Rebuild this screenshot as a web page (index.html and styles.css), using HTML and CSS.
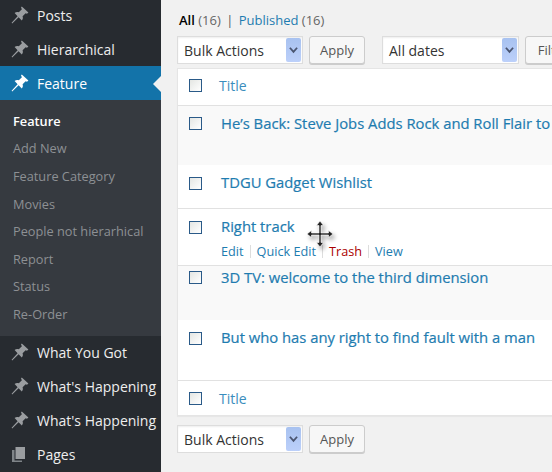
FILE: index.html
```html
<!DOCTYPE html>
<html lang="en">
<head>
<meta charset="utf-8">
<title>Feature</title>
<link rel="stylesheet" href="styles.css">
</head>
<body>
<svg class="defs" width="0" height="0" aria-hidden="true">
  <symbol id="pin" viewBox="0 0 18 18">
    <path d="M10.8 0.4 L17.4 6.6 L16 7.8 L14.6 7.2 L11.6 10.2 C12.2 12 11.8 13.4 10.8 14.4 L7.6 11.2 L1.2 17.4 L0.6 16.8 L6.6 10.2 L3.6 7 C4.8 6 6.2 5.6 7.8 6.2 L10.9 3.2 L10 1.6 Z"/>
  </symbol>
</svg>
<div class="page">
  <nav class="sidebar">
    <a class="menu-item"><svg class="menu-icon"><use href="#pin"/></svg><span>Posts</span></a>
    <a class="menu-item"><svg class="menu-icon"><use href="#pin"/></svg><span>Hierarchical</span></a>
    <a class="menu-item current"><svg class="menu-icon"><use href="#pin"/></svg><span>Feature</span></a>
    <div class="submenu">
      <a class="sub-item active">Feature</a>
      <a class="sub-item">Add New</a>
      <a class="sub-item">Feature Category</a>
      <a class="sub-item">Movies</a>
      <a class="sub-item">People not hierarhical</a>
      <a class="sub-item">Report</a>
      <a class="sub-item">Status</a>
      <a class="sub-item">Re-Order</a>
    </div>
    <a class="menu-item lower"><svg class="menu-icon"><use href="#pin"/></svg><span>What You Got</span></a>
    <a class="menu-item lower"><svg class="menu-icon"><use href="#pin"/></svg><span>What's Happening</span></a>
    <a class="menu-item lower"><svg class="menu-icon"><use href="#pin"/></svg><span>What's Happening</span></a>
    <a class="menu-item lower"><svg class="menu-icon" viewBox="0 0 18 18"><path class="page-back" d="M1 5 H3.5 V15.5 H11 V17 H1 Z"/><path d="M4.5 2 H14 V14 H4.5 Z"/></svg><span>Pages</span></a>
  </nav>
  <main class="content">
    <div class="views"><b>All</b> <span class="count">(16)</span> <span class="sep">|</span> <a class="link">Published</a> <span class="count">(16)</span></div>
    <div class="tablenav">
      <div class="select bulk"><span>Bulk Actions</span><i class="arrow"><svg viewBox="0 0 10 8" width="10" height="8"><path d="M1 1.5 L5 6 L9 1.5" /></svg></i></div>
      <div class="button">Apply</div>
      <div class="select dates"><span>All dates</span><i class="arrow"><svg viewBox="0 0 10 8" width="10" height="8"><path d="M1 1.5 L5 6 L9 1.5" /></svg></i></div>
      <div class="button">Filter</div>
    </div>
    <div class="table">
      <div class="row head"><i class="check"></i><a class="col-title">Title</a></div>
      <div class="row post r1 alt"><i class="check"></i><a class="post-title">He’s Back: Steve Jobs Adds Rock and Roll Flair to</a></div>
      <div class="row post r2"><i class="check"></i><a class="post-title">TDGU Gadget Wishlist</a></div>
      <div class="row post r3">
        <i class="check"></i>
        <div class="stack">
          <a class="post-title">Right track</a>
          <div class="actions"><a class="link">Edit</a><b class="bar"></b><a class="link">Quick Edit</a><b class="bar"></b><a class="trash">Trash</a><b class="bar"></b><a class="link">View</a></div>
        </div>
      </div>
      <div class="row post r4 alt"><i class="check"></i><a class="post-title">3D TV: welcome to the third dimension</a></div>
      <div class="row post r5"><i class="check"></i><a class="post-title">But who has any right to find fault with a man</a></div>
      <div class="row foot"><i class="check"></i><a class="col-title">Title</a></div>
    </div>
    <div class="tablenav bottom">
      <div class="select bulk"><span>Bulk Actions</span><i class="arrow"><svg viewBox="0 0 10 8" width="10" height="8"><path d="M1 1.5 L5 6 L9 1.5" /></svg></i></div>
      <div class="button">Apply</div>
    </div>
  </main>
</div>
<svg class="cursor" viewBox="0 0 28 28" width="28" height="28" aria-hidden="true">
  <path class="cursor-main" d="M14 1 L17.5 5.5 H15 V13 H22.5 V10.5 L27 14 L22.5 17.5 V15 H15 V22.5 H17.5 L14 27 L10.5 22.5 H13 V15 H5.5 V17.5 L1 14 L5.5 10.5 V13 H13 V5.5 H10.5 Z"/>
</svg>
</body>
</html>
```
FILE: styles.css
```css
html, body { margin: 0; padding: 0; height: 100%; overflow: hidden; }
body { background: #f1f1f1; font-family: "Open Sans", sans-serif; font-size: 13px; color: #444; position: relative; }
.defs { position: absolute; }
.page { display: flex; height: 472px; width: 552px; overflow: hidden; }

.sidebar { width: 161px; flex: none; background: #272b30; margin-top: -2px; display: flex; flex-direction: column; height: 474px; }
.menu-item { display: flex; align-items: center; height: 34px; flex: none; color: #eee; font-size: 14px; box-sizing: border-box; padding-left: 11px; white-space: nowrap; overflow: hidden; position: relative; }
.menu-item.lower { padding-bottom: 2px; }
.menu-icon { width: 18px; height: 18px; flex: none; margin-right: 8px; fill: #9a9da0; }
.menu-icon .page-back { fill: #7f8488; }
.menu-item.current { background: #1373a9; color: #fff; }
.menu-item.current .menu-icon { fill: #fff; }
.menu-item.current::after { content: ""; position: absolute; right: 0; top: 10px; border: 8px solid transparent; border-right-color: #f1f1f1; border-left: 0; }
.submenu { background: #363a40; height: 236px; flex: none; display: flex; flex-direction: column; padding-top: 7.8px; box-sizing: border-box; }
.sub-item { height: 27.6px; flex: none; line-height: 27.6px; padding-left: 13px; font-size: 12.75px; color: #8d9094; white-space: nowrap; }
.sub-item.active { color: #fff; font-weight: 600; }

.content { flex: 1; min-width: 0; padding: 0 0 0 16px; }
.views { height: 36px; box-sizing: border-box; padding: 11px 0 0 2px; font-size: 13px; line-height: 18px; color: #666; white-space: nowrap; }
.views b { font-weight: 600; color: #000; }
.views .sep { margin: 0 2px; color: #555; }
.link { color: #1e7cb0; }
.count { color: #666; }

.tablenav { display: flex; align-items: flex-start; height: 32px; white-space: nowrap; }
.tablenav.bottom { margin-top: 9px; }
.select { flex: none; height: 28px; box-sizing: border-box; background: #fff; border: 1px solid #ddd; box-shadow: inset 0 1px 2px rgba(0,0,0,.07); display: flex; align-items: center; justify-content: space-between; font-size: 14px; color: #333; padding: 0 1px 0 6px; }
.select.bulk { width: 126px; margin-right: 6px; }
.select.dates { width: 137px; margin: 0 6px 0 17px; }
.arrow { width: 15px; height: 24px; background: linear-gradient(#a8c2f0, #bcd0fa); border-radius: 2px; display: flex; align-items: center; justify-content: center; }
.arrow svg { fill: none; stroke: #4a5570; stroke-width: 2; width: 9px; }
.button { height: 28px; width: 56px; flex: none; box-sizing: border-box; background: #f7f7f7; border: 1px solid #ccc; border-radius: 3px; box-shadow: 0 1px 0 #ccc; color: #555; font-size: 13px; line-height: 26px; text-align: center; }

.table { background: #fff; border: 1px solid #e5e5e5; border-right: 0; box-shadow: 0 1px 1px rgba(0,0,0,.04); width: 375px; box-sizing: border-box; display: flex; flex-direction: column; }
.row { display: flex; flex: none; box-sizing: border-box; padding-left: 11px; white-space: nowrap; overflow: hidden; }
.check { width: 13px; height: 13px; flex: none; box-sizing: border-box; border: 1px solid #2a5a88; background: linear-gradient(135deg, #e4e6e3, #fff); }
.head, .foot { align-items: center; }
.head { border-bottom: 1px solid #e1e1e1; height: 37px; padding-bottom: 3px; }
.foot { border-top: 1px solid #e1e1e1; height: 35px; }
.col-title { margin-left: 17px; font-size: 14px; color: #3a8dbd; }
.post { align-items: flex-start; }
.alt { background: #f9f9f9; }
.post-title { margin-left: 19px; font-size: 14.8px; font-weight: 400; color: #1e7cb0; line-height: 20px; -webkit-text-stroke: .2px #1e7cb0; }
.r1 { height: 59px; padding-top: 7px; }
.r1 .check { margin-top: 4px; }
.r2 { height: 44px; padding-top: 7px; border-bottom: 1px solid #e1e1e1; }
.r2 .check { margin-top: 5px; }
.r3 { height: 57px; padding-top: 7px; border-bottom: 1px solid #e1e1e1; }
.r3 .check { margin-top: 5px; }
.r3 .actions { margin-top: 6px; }
.r4 { height: 54px; padding-top: 1px; }
.r4 .check { margin-top: 4px; }
.r5 { height: 60px; padding-top: 7px; }
.r5 .check { margin-top: 5px; }
.stack { display: flex; flex-direction: column; }
.actions { margin: 5px 0 0 19px; display: flex; align-items: center; font-size: 12.7px; line-height: 18px; }
.bar { width: 1px; height: 13px; background: #ddd; margin: 0 6px; }
.trash { color: #a00; }

.cursor { position: absolute; left: 306px; top: 220px; pointer-events: none; filter: drop-shadow(2px 3px 2px rgba(0,0,0,.35)); }
.cursor-main { fill: #222; stroke: #fff; stroke-width: .6; }
```
